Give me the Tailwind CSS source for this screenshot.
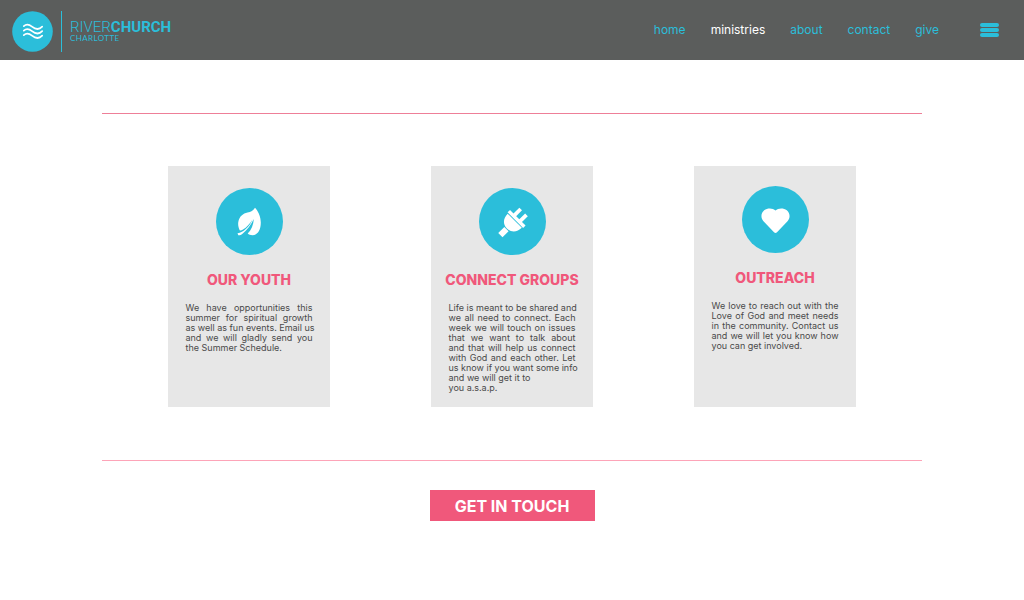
<!DOCTYPE html>
<html lang="en">
<head>
<meta charset="utf-8">
<meta name="viewport" content="width=device-width, initial-scale=1">
<title>River Church Charlotte – Ministries</title>
<script src="https://cdn.jsdelivr.net/npm/@tailwindcss/browser@4"></script>
</head>
<body class="min-h-screen bg-white font-['Inter',sans-serif] text-[#4a4a4a]">
<header class="flex h-[60px] items-center justify-between bg-[#5b5d5c] pr-[25px] pl-3 text-[#2bbeda]">
  <a href="#" class="flex items-center gap-2 pt-[2px]">
    <svg class="size-[41px]" viewBox="0 0 41 41" fill="none" aria-hidden="true">
      <circle cx="20.500" cy="20.500" r="20.300" fill="#2bbeda"/>
      <g stroke="#fff" stroke-width="1.700" stroke-linecap="round">
        <path d="M11.800 15.200C14.500 12.700 17 13.300 20 15.700C23.500 18.500 27 19 30.200 15.700"/>
        <path d="M11.800 19.700C14.500 17.200 17 17.800 20 20.200C23.500 23 27 23.500 30.200 20.200"/>
        <path d="M11.800 24.200C14.500 21.700 17 22.300 20 24.700C23.500 27.500 27 28 30.200 24.700"/>
      </g>
    </svg>
    <span class="h-[41px] w-px bg-[#2bbeda]"></span>
    <span class="flex flex-col">
      <span class="font-['Roboto',sans-serif] text-[15px] leading-[15px] font-light">RIVER<b class="font-bold">CHURCH</b></span>
      <span class="font-['Lato',sans-serif] text-[8px] leading-[7px] tracking-wider">CHARLOTTE</span>
    </span>
  </a>
  <nav class="flex items-center gap-[25px] text-[12px]">
    <a href="#">home</a>
    <a href="#" class="text-white" aria-current="page">ministries</a>
    <a href="#">about</a>
    <a href="#">contact</a>
    <a href="#">give</a>
    <button type="button" aria-label="Open menu" class="ml-4 flex w-[19px] flex-col gap-px">
      <span class="h-1 rounded-xs bg-[#2bbeda]"></span>
      <span class="h-1 rounded-xs bg-[#2bbeda]"></span>
      <span class="h-1 rounded-xs bg-[#2bbeda]"></span>
    </button>
  </nav>
</header>
<main class="mx-auto flex w-4/5 flex-col items-center pt-[53px]">
  <hr class="h-px w-full border-0 bg-[#ee7f98]">
  <section class="flex w-full flex-wrap justify-center gap-x-[101px] gap-y-8 pt-[52px] pb-[53px]">
    <article class="flex min-h-[241px] w-[162px] flex-col items-center bg-[#e7e7e7] pt-[22px]">
      <svg class="size-[67px]" viewBox="0 0 67 67" aria-hidden="true">
        <circle cx="33.500" cy="33.500" r="33.500" fill="#2bbeda"/>
        <path fill="#fff" d="M39 19.700C42 23 44.800 28 44.800 34.500C44.800 42 41.500 47.200 36.500 47.200C34.300 47.200 32.800 46.600 31.700 45.600C35.200 42 37.500 37 37.800 31C35 37 31 42.300 26.500 45.800C25 47 23.500 47.500 22.300 47.300L21.500 45.300C24.500 44.800 27.500 43.200 30 40.800C33 38 35 35 36.500 31.500C34 35.500 30.500 39.500 27 41.600C25.500 42.500 24.200 42.800 23.700 42.300C22.300 39.500 21.700 36 22.500 33C23.500 28.500 27 25.500 31.500 24.500C34.800 23.800 37.500 22.500 39 19.700Z"/>
      </svg>
      <h2 class="mt-4 text-[14px] leading-[18px] font-extrabold whitespace-nowrap text-[#f0587b]">OUR YOUTH</h2>
      <p class="mt-[14px] w-[127px] text-justify text-[9px] leading-[10px] whitespace-nowrap [text-align-last:justify]">We have opportunities this<br>summer for spiritual growth<br>as well as fun events. Email us<br>and we will gladly send you<br><span class="block [text-align-last:left]">the Summer Schedule.</span></p>
    </article>
    <article class="flex min-h-[241px] w-[162px] flex-col items-center bg-[#e7e7e7] pt-[22px]">
      <svg class="size-[67px]" viewBox="0 0 67 67" aria-hidden="true">
        <circle cx="33.500" cy="33.500" r="33.500" fill="#2bbeda"/>
        <g fill="#fff" transform="translate(37.500 31) rotate(45)">
          <rect x="-11" y="-1.800" width="22" height="3.400"/>
          <rect x="-6" y="-10" width="3.800" height="9"/>
          <rect x="2.200" y="-10" width="3.800" height="9"/>
          <path d="M-10 2.500H10C10 9 6 13.600 0 13.600C-6 13.600-10 9-10 2.500Z"/>
          <rect x="-3" y="14.200" width="6" height="8.600"/>
        </g>
      </svg>
      <h2 class="mt-4 text-[14px] leading-[18px] font-extrabold whitespace-nowrap text-[#f0587b]">CONNECT GROUPS</h2>
      <p class="mt-[14px] w-[127px] text-justify text-[9px] leading-[10px] whitespace-nowrap [text-align-last:justify]">Life is meant to be shared and<br>we all need to connect. Each<br>week we will touch on issues<br>that we want to talk about<br>and that will help us connect<br>with God and each other. Let<br>us know if you want some info<br><span class="block [text-align-last:left]">and we will get it to<br>you a.s.a.p.</span></p>
    </article>
    <article class="flex min-h-[241px] w-[162px] flex-col items-center bg-[#e7e7e7] pt-5">
      <svg class="size-[67px]" viewBox="0 0 67 67" aria-hidden="true">
        <circle cx="33.500" cy="33.500" r="33.500" fill="#2bbeda"/>
        <path fill="#fff" d="M33.500 24.500C36 22 41.500 21.600 44.800 24.300C48.300 27.200 48.400 32 45.500 35.300L35 46.300Q33.500 47.800 32 46.300L21.500 35.300C18.600 32 18.700 27.200 22.200 24.300C25.500 21.600 31 22 33.500 24.500Z"/>
      </svg>
      <h2 class="mt-4 text-[14px] leading-[18px] font-extrabold whitespace-nowrap text-[#f0587b]">OUTREACH</h2>
      <p class="mt-[14px] w-[127px] text-justify text-[9px] leading-[10px] whitespace-nowrap [text-align-last:justify]">We love to reach out with the<br>Love of God and meet needs<br>in the community. Contact us<br>and we will let you know how<br><span class="block [text-align-last:left]">you can get involved.</span></p>
    </article>
  </section>
  <hr class="h-px w-full border-0 bg-[#fda4b8]">
  <button type="button" class="mt-[29px] h-[31px] w-[165px] bg-[#f0587b] text-[16px] font-bold text-white">GET IN TOUCH</button>
</main>
</body>
</html>
